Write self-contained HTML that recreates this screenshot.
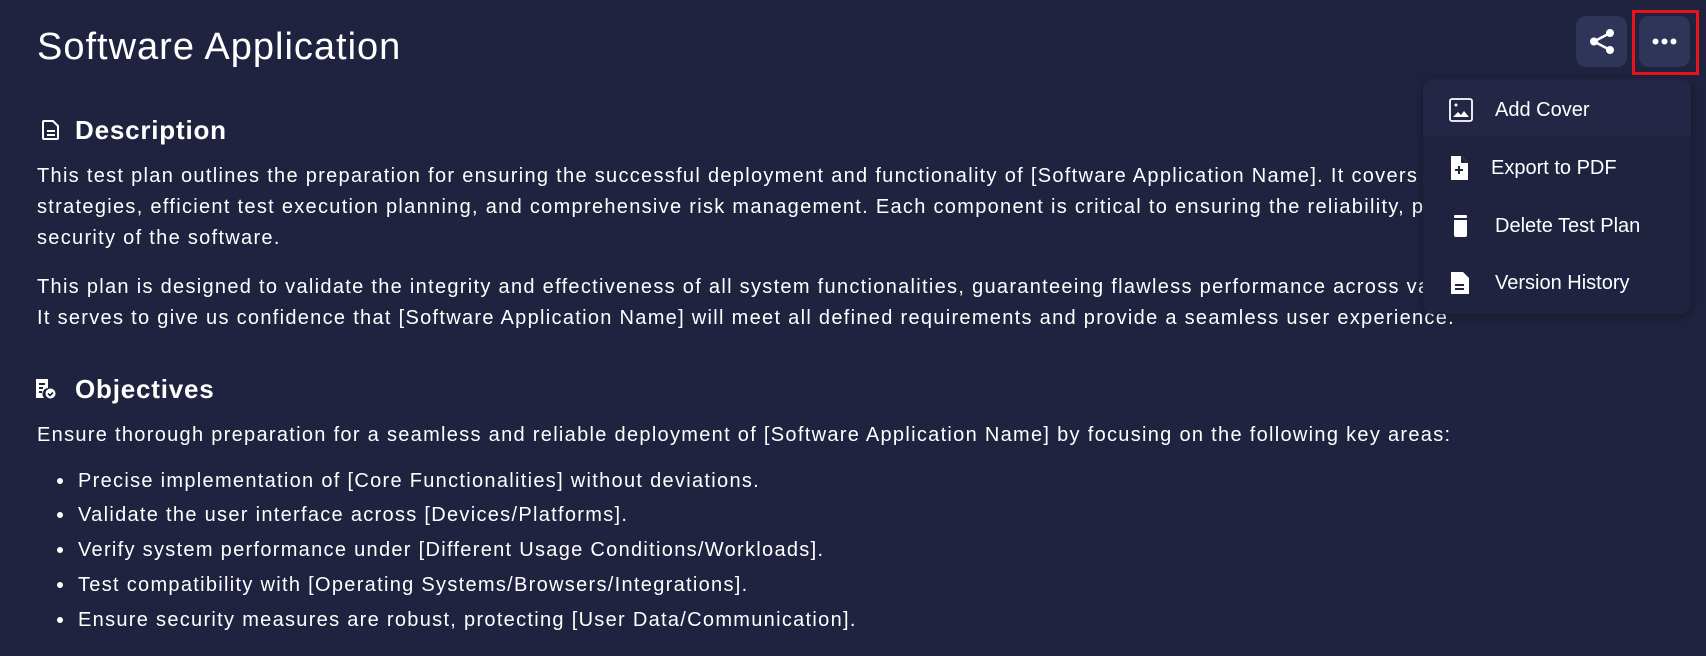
<!DOCTYPE html>
<html><head><meta charset="utf-8"><style>
html,body{margin:0;padding:0}
body{width:1706px;height:656px;background:#20233f;color:#fff;font-family:"Liberation Sans",sans-serif;position:relative;overflow:hidden}
.l{position:absolute;left:37px;white-space:nowrap;font-size:20px;letter-spacing:1.3px;line-height:24px;transform:translateY(-12px)}
.b{left:78px}
.dot{position:absolute;left:57px;width:6px;height:6px;border-radius:50%;background:#fff;transform:translateY(-3px)}
h1{position:absolute;left:37px;top:20px;margin:0;font-weight:400;font-size:38px;letter-spacing:1px;line-height:54px}
.h{position:absolute;left:75px;font-weight:700;font-size:26px;letter-spacing:0.8px;line-height:30px;transform:translateY(-15px)}
.btn{position:absolute;top:16px;width:51px;height:51px;border-radius:10px;background:#2f3459}
.menu{position:absolute;left:1423px;top:78px;width:268px;height:236px;background:#1f2340;border-radius:10px;box-shadow:0 2px 10px rgba(0,0,0,.35)}
.mi{position:absolute;left:0;width:268px;font-size:20px;line-height:24px;transform:translateY(-12px)}
.mi span{position:absolute;left:72px}
.mi svg{position:absolute;left:25px;top:0}
</style></head><body>
<h1>Software Application</h1>
<svg style="position:absolute;left:41px;top:119px" width="20" height="22" viewBox="0 0 20 22"><path d="M3 2h9l5 5v12a1 1 0 0 1-1 1H3a1 1 0 0 1-1-1V3a1 1 0 0 1 1-1z" fill="none" stroke="#fff" stroke-width="2"/><path d="M6 12h8M6 16h8" stroke="#fff" stroke-width="2"/></svg>
<div class="h" style="top:130px">Description</div>
<div class="l" style="top:176px">This test plan outlines the preparation for ensuring the successful deployment and functionality of [Software Application Name]. It covers testing</div>
<div class="l" style="top:207px">strategies, efficient test execution planning, and comprehensive risk management. Each component is critical to ensuring the reliability, performance and</div>
<div class="l" style="top:238px">security of the software.</div>
<div class="l" style="top:287px">This plan is designed to validate the integrity and effectiveness of all system functionalities, guaranteeing flawless performance across various scenarios.</div>
<div class="l" style="top:318px">It serves to give us confidence that [Software Application Name] will meet all defined requirements and provide a seamless user experience.</div>
<svg style="position:absolute;left:35px;top:378px" width="22" height="22" viewBox="0 0 22 22"><path d="M1 1h12v9a6 6 0 0 0-4 10H1z" fill="#fff"/><path d="M4 6h6M4 10h4M4 14h3" stroke="#20233f" stroke-width="2"/><circle cx="15.5" cy="15.5" r="5" fill="#fff"/><path d="M13 15.5l2 2 3-3" stroke="#20233f" stroke-width="1.6" fill="none"/></svg>
<div class="h" style="top:389px">Objectives</div>
<div class="l" style="top:435px">Ensure thorough preparation for a seamless and reliable deployment of [Software Application Name] by focusing on the following key areas:</div>
<div class="dot" style="top:481px"></div><div class="l b" style="top:481px">Precise implementation of [Core Functionalities] without deviations.</div>
<div class="dot" style="top:515px"></div><div class="l b" style="top:515px">Validate the user interface across [Devices/Platforms].</div>
<div class="dot" style="top:550px"></div><div class="l b" style="top:550px">Verify system performance under [Different Usage Conditions/Workloads].</div>
<div class="dot" style="top:585px"></div><div class="l b" style="top:585px">Test compatibility with [Operating Systems/Browsers/Integrations].</div>
<div class="dot" style="top:620px"></div><div class="l b" style="top:620px">Ensure security measures are robust, protecting [User Data/Communication].</div>

<div class="btn" style="left:1576px"><svg width="51" height="51" viewBox="0 0 51 51"><circle cx="34" cy="17" r="4" fill="#fff"/><circle cx="34" cy="34" r="4" fill="#fff"/><circle cx="18" cy="25.5" r="4" fill="#fff"/><path d="M34 17L18 25.5L34 34" stroke="#fff" stroke-width="2.5" fill="none"/></svg></div>
<div style="position:absolute;left:1632px;top:10px;width:61px;height:59px;border:3px solid #e8131b"></div>
<div class="btn" style="left:1639px"><svg width="51" height="51" viewBox="0 0 51 51"><circle cx="16.5" cy="25.5" r="3" fill="#fff"/><circle cx="25.5" cy="25.5" r="3" fill="#fff"/><circle cx="34.5" cy="25.5" r="3" fill="#fff"/></svg></div>

<div class="menu">
<div style="position:absolute;left:0;top:2px;width:268px;height:56px;background:#232745;border-radius:10px 10px 0 0"></div>
<div class="mi" style="top:32px"><svg width="26" height="26" viewBox="0 0 26 26"><rect x="2" y="1" width="22" height="22" rx="2" fill="none" stroke="#fff" stroke-width="1.8"/><circle cx="8" cy="7" r="1.5" fill="#fff"/><path d="M5 19l5-5 3 3 3-4 5 6z" fill="#fff"/></svg><span>Add Cover</span></div>
<div class="mi" style="top:90px"><svg width="26" height="26" viewBox="0 0 26 26"><path d="M3 0h10l7 7v17H3z" fill="#fff"/><path d="M13 0v7h7" fill="#1f2340"/><path d="M11 10v8M7 14h8" stroke="#1f2340" stroke-width="2"/></svg><span style="left:68px">Export to PDF</span></div>
<div class="mi" style="top:148px"><svg width="26" height="26" viewBox="0 0 26 26"><rect x="6" y="1" width="13" height="3" rx="1" fill="#fff"/><path d="M6 6h13v15a2 2 0 0 1-2 2H8a2 2 0 0 1-2-2z" fill="#fff"/></svg><span>Delete Test Plan</span></div>
<div class="mi" style="top:205px"><svg width="26" height="26" viewBox="0 0 26 26"><path d="M3 1h12l6 6v16H3z" fill="#fff"/><path d="M7 14h9M7 18h9" stroke="#1f2340" stroke-width="2"/></svg><span>Version History</span></div>
</div>
</body></html>
